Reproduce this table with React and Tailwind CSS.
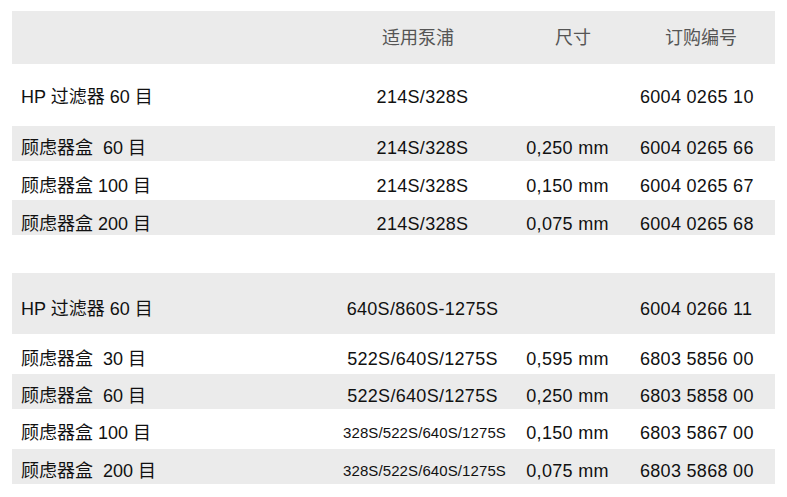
import React from 'react';

const rows1 = [
    { name: 'HP 过滤器 60 目', pump: '214S/328S', size: '', no: '6004 0265 10', h: 'h-[62px] pt-[4px]', bg: '' },
    { name: '顾虑器盒\u00a0 60 目', pump: '214S/328S', size: '0,250 mm', no: '6004 0265 66', h: 'h-[35px] pt-[9px]', bg: 'bg-[#ebebeb]' },
    { name: '顾虑器盒 100 目', pump: '214S/328S', size: '0,150 mm', no: '6004 0265 67', h: 'h-[39px] pt-[10px]', bg: '' },
    { name: '顾虑器盒 200 目', pump: '214S/328S', size: '0,075 mm', no: '6004 0265 68', h: 'h-[35px] pt-[12px]', bg: 'bg-[#ebebeb]' },
];

const rows2 = [
    { name: 'HP 过滤器 60 目', pump: '640S/860S-1275S', size: '', no: '6004 0266 11', h: 'h-[61px] pt-[10px]', bg: 'bg-[#ebebeb]' },
    { name: '顾虑器盒\u00a0 30 目', pump: '522S/640S/1275S', size: '0,595 mm', no: '6803 5856 00', h: 'h-[40px] pt-[10px]', bg: '' },
    { name: '顾虑器盒\u00a0 60 目', pump: '522S/640S/1275S', size: '0,250 mm', no: '6803 5858 00', h: 'h-[35px] pt-[9px]', bg: 'bg-[#ebebeb]' },
    { name: '顾虑器盒 100 目', pump: '328S/522S/640S/1275S', size: '0,150 mm', no: '6803 5867 00', h: 'h-[40px] pt-[8px]', bg: '', small: true },
    { name: '顾虑器盒\u00a0 200 目', pump: '328S/522S/640S/1275S', size: '0,075 mm', no: '6803 5868 00', h: 'h-[35px] pt-[8px]', bg: 'bg-[#ebebeb]', small: true },
];

const Row = ({ r }) => (
    <div className={`flex items-center ${r.h} ${r.bg}`}>
        <div className="w-[318px] pl-[9px] whitespace-pre">{r.name}</div>
        <div className={`w-[182px] text-center whitespace-nowrap ${r.small ? 'text-[15px] tracking-[0.1px] pl-[7px]' : 'tracking-[0.3px] pl-[3px]'}`}>{r.pump}</div>
        <div className="w-[112px] text-center tracking-[0.3px] pr-[1px]">{r.size}</div>
        <div className="flex-1 pl-[16px] tracking-[0.3px]">{r.no}</div>
    </div>
);

export default function App() {
    return (
        <div className="bg-white w-[787px] h-[497px] pt-[11px] pl-[12px] text-[18px] leading-[22px] text-[#111]"
            style={{ fontFamily: '"Liberation Sans", "Noto Sans CJK SC", sans-serif' }}>
            <div className="w-[763px]">
                <div className="flex items-center h-[53px] bg-[#ebebeb] text-[#555]">
                    <div className="w-[318px]"></div>
                    <div className="w-[182px] text-center pr-[6px]">适用泵浦</div>
                    <div className="w-[112px] text-center pl-[10px]">尺寸</div>
                    <div className="flex-1 pl-[41px]">订购编号</div>
                </div>
                {rows1.map((r, i) => <Row key={i} r={r} />)}
                <div className="h-[38px]"></div>
                {rows2.map((r, i) => <Row key={i} r={r} />)}
            </div>
        </div>
    );
}
